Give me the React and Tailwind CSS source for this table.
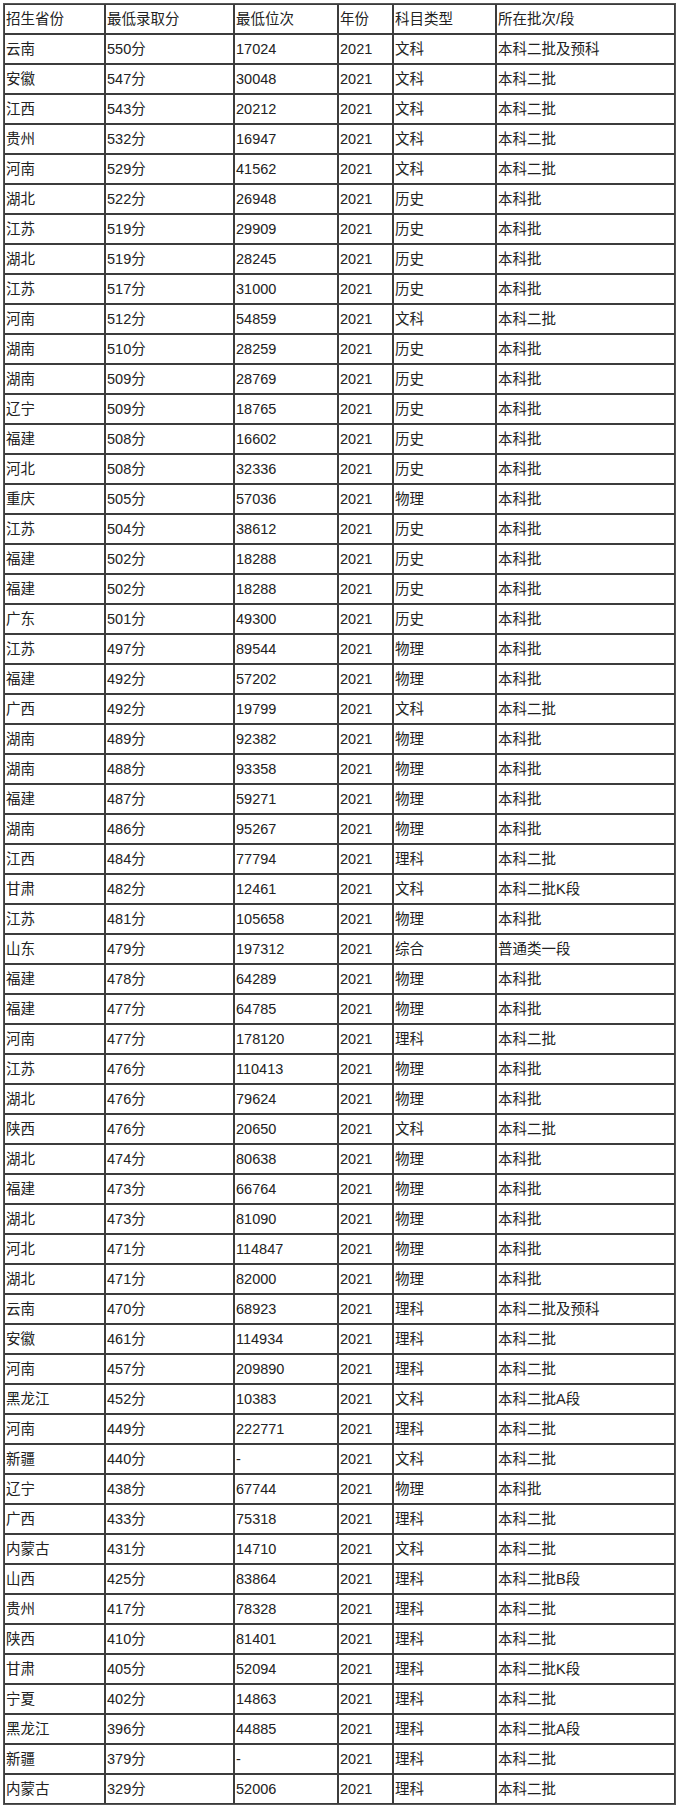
import React from 'react';

const head = ['招生省份', '最低录取分', '最低位次', '年份', '科目类型', '所在批次/段'];
const widths = ['w-[101px]', 'w-[129px]', 'w-[104px]', 'w-[55px]', 'w-[103px]', 'w-[179px]'];

// 省份, 分数, 位次, 科目, 批次 (年份都是2021)
const rows = [
  ['云南', 550, '17024', '文科', '本科二批及预科'],
  ['安徽', 547, '30048', '文科', '本科二批'],
  ['江西', 543, '20212', '文科', '本科二批'],
  ['贵州', 532, '16947', '文科', '本科二批'],
  ['河南', 529, '41562', '文科', '本科二批'],
  ['湖北', 522, '26948', '历史', '本科批'],
  ['江苏', 519, '29909', '历史', '本科批'],
  ['湖北', 519, '28245', '历史', '本科批'],
  ['江苏', 517, '31000', '历史', '本科批'],
  ['河南', 512, '54859', '文科', '本科二批'],
  ['湖南', 510, '28259', '历史', '本科批'],
  ['湖南', 509, '28769', '历史', '本科批'],
  ['辽宁', 509, '18765', '历史', '本科批'],
  ['福建', 508, '16602', '历史', '本科批'],
  ['河北', 508, '32336', '历史', '本科批'],
  ['重庆', 505, '57036', '物理', '本科批'],
  ['江苏', 504, '38612', '历史', '本科批'],
  ['福建', 502, '18288', '历史', '本科批'],
  ['福建', 502, '18288', '历史', '本科批'],
  ['广东', 501, '49300', '历史', '本科批'],
  ['江苏', 497, '89544', '物理', '本科批'],
  ['福建', 492, '57202', '物理', '本科批'],
  ['广西', 492, '19799', '文科', '本科二批'],
  ['湖南', 489, '92382', '物理', '本科批'],
  ['湖南', 488, '93358', '物理', '本科批'],
  ['福建', 487, '59271', '物理', '本科批'],
  ['湖南', 486, '95267', '物理', '本科批'],
  ['江西', 484, '77794', '理科', '本科二批'],
  ['甘肃', 482, '12461', '文科', '本科二批K段'],
  ['江苏', 481, '105658', '物理', '本科批'],
  ['山东', 479, '197312', '综合', '普通类一段'],
  ['福建', 478, '64289', '物理', '本科批'],
  ['福建', 477, '64785', '物理', '本科批'],
  ['河南', 477, '178120', '理科', '本科二批'],
  ['江苏', 476, '110413', '物理', '本科批'],
  ['湖北', 476, '79624', '物理', '本科批'],
  ['陕西', 476, '20650', '文科', '本科二批'],
  ['湖北', 474, '80638', '物理', '本科批'],
  ['福建', 473, '66764', '物理', '本科批'],
  ['湖北', 473, '81090', '物理', '本科批'],
  ['河北', 471, '114847', '物理', '本科批'],
  ['湖北', 471, '82000', '物理', '本科批'],
  ['云南', 470, '68923', '理科', '本科二批及预科'],
  ['安徽', 461, '114934', '理科', '本科二批'],
  ['河南', 457, '209890', '理科', '本科二批'],
  ['黑龙江', 452, '10383', '文科', '本科二批A段'],
  ['河南', 449, '222771', '理科', '本科二批'],
  ['新疆', 440, '-', '文科', '本科二批'],
  ['辽宁', 438, '67744', '物理', '本科批'],
  ['广西', 433, '75318', '理科', '本科二批'],
  ['内蒙古', 431, '14710', '文科', '本科二批'],
  ['山西', 425, '83864', '理科', '本科二批B段'],
  ['贵州', 417, '78328', '理科', '本科二批'],
  ['陕西', 410, '81401', '理科', '本科二批'],
  ['甘肃', 405, '52094', '理科', '本科二批K段'],
  ['宁夏', 402, '14863', '理科', '本科二批'],
  ['黑龙江', 396, '44885', '理科', '本科二批A段'],
  ['新疆', 379, '-', '理科', '本科二批'],
  ['内蒙古', 329, '52006', '理科', '本科二批'],
];

const cell = 'h-[30px] border border-[#3c3c3c] pl-px pr-0 py-0 text-left align-middle font-normal whitespace-nowrap';

export default function App() {
  return (
    <div className="bg-white min-h-[1805px] pt-[3px] pl-[3px] text-[14.5px] leading-none text-[#222] font-['Liberation_Sans','Noto_Sans_CJK_SC',sans-serif]">
      <table className="table-fixed border-separate border-spacing-0 border border-[#555] w-[673px]">
        <thead>
          <tr>
            {head.map((h, i) => (
              <th key={h} className={`${cell} ${widths[i]}`}>{h}</th>
            ))}
          </tr>
        </thead>
        <tbody>
          {rows.map(([prov, score, rank, subj, batch], i) => (
            <tr key={i}>
              <td className={cell}>{prov}</td>
              <td className={cell}>{score}分</td>
              <td className={cell}>{rank}</td>
              <td className={cell}>2021</td>
              <td className={cell}>{subj}</td>
              <td className={cell}>{batch}</td>
            </tr>
          ))}
        </tbody>
      </table>
    </div>
  );
}
